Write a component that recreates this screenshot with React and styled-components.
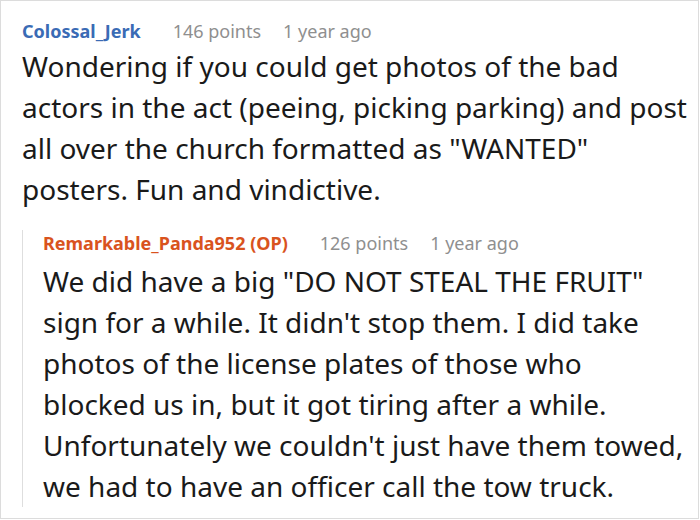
import React from 'react'
import styled, { createGlobalStyle } from 'styled-components'

const Global = createGlobalStyle`
  body {
    margin: 0;
    background: #fff;
    font-family: "Noto Sans", "Open Sans", sans-serif;
  }
`

const Frame = styled.div`
  box-sizing: border-box;
  width: 699px;
  height: 519px;
  border: 1px solid #dcdcdc;
  overflow: hidden;
  padding: 17px 0 0 21px;
`

const Meta = styled.div`
  display: flex;
  align-items: baseline;
  gap: 22px;
  font-size: 18px;
  line-height: 26px;
  color: #8f8f8f;
  margin-top: ${p => p.$offset || 0}px;
`

const User = styled.span`
  font-weight: 700;
  color: ${p => p.$color};
  margin-right: 10px;
`

const Body = styled.p`
  margin: 2px 0 0;
  font-size: 28px;
  line-height: 41px;
  color: #1a1a1a;
`

const Reply = styled.div`
  margin-top: 32px;
  padding: 0 10px 0 20px;
  border-left: 1px solid #dedede;
`

const ReplyBody = styled(Body)`
  margin: 5px 0 -4px;
`

const Header = ({ user, color, points, time, offset }) => (
  <Meta $offset={offset}>
    <User $color={color}>{user}</User>
    <span>{points} points</span>
    <span>{time}</span>
  </Meta>
)

export default function App() {
  return (
    <>
      <Global />
      <Frame>
        <Header user="Colossal_Jerk" color="#3a6bb5" points={146} time="1 year ago" />
        <Body>
          Wondering if you could get photos of the bad actors in the act (peeing, picking parking) and post all over the church formatted as "WANTED" posters. Fun and vindictive.
        </Body>
        <Reply>
          <Header user="Remarkable_Panda952 (OP)" color="#d9531e" points={126} time="1 year ago" offset={-12} />
          <ReplyBody>
            We did have a big "DO NOT STEAL THE FRUIT" sign for a while. It didn't stop them. I did take photos of the license plates of those who blocked us in, but it got tiring after a while. Unfortunately we couldn't just have them towed, we had to have an officer call the tow truck.
          </ReplyBody>
        </Reply>
      </Frame>
    </>
  )
}
